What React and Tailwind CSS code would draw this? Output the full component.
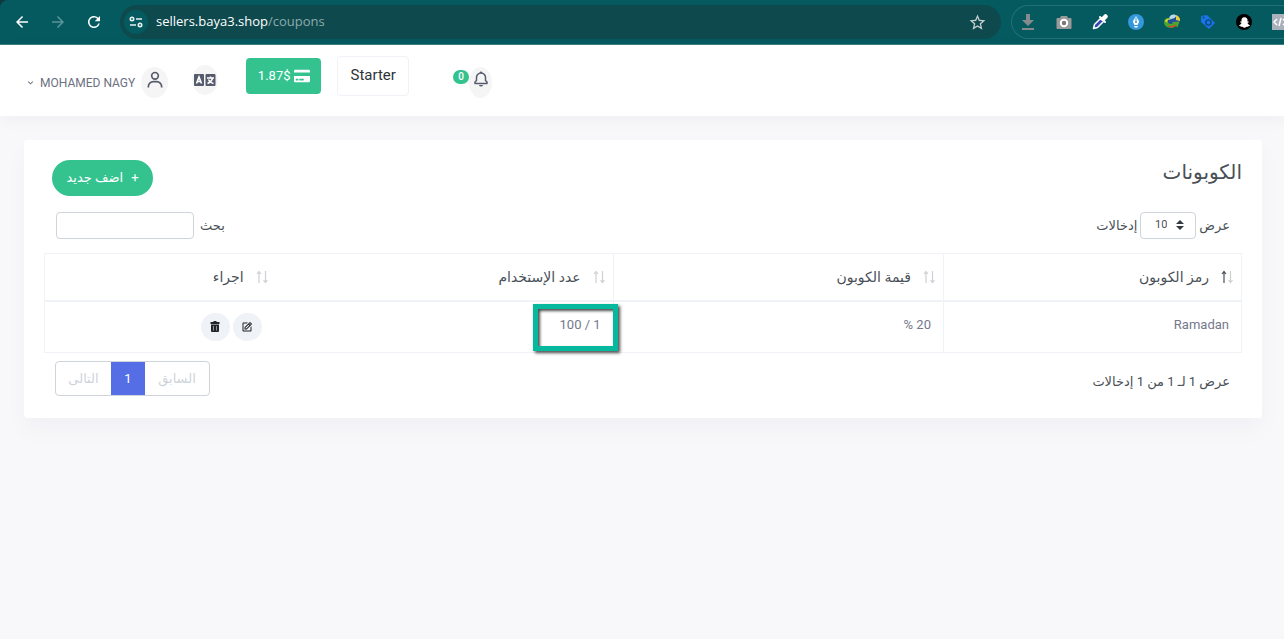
import { useState } from "react";
import { BiBell, BiChevronDown, BiEdit, BiUser } from "react-icons/bi";
import { FaCreditCard, FaSnapchatGhost } from "react-icons/fa";
import { MdArrowBack, MdArrowForward, MdRefresh, MdStarBorder } from "react-icons/md";

const columns = [
  { label: "رمز الكوبون", width: "w-[24.9%]", sorted: true },
  { label: "قيمة الكوبون", width: "w-[27.6%]" },
  { label: "عدد الإستخدام", width: "w-[28.2%]" },
  { label: "اجراء", width: "w-auto" },
];

const coupons = [{ code: "Ramadan", value: "20 %", usage: "1 / 100" }];

const SiteInfoIcon = () => (
  <svg viewBox="0 0 14 12" className="h-3 w-[14px]" fill="none" stroke="#e8f0f0" strokeWidth="1.6">
    <circle cx="3" cy="3" r="1.7" />
    <path d="M7 3h6M1 9h6" />
    <circle cx="11" cy="9" r="1.7" />
  </svg>
);

const DownloadIcon = () => (
  <svg viewBox="0 0 16 16" className="size-4" fill="#858b8c">
    <path d="M6 0h4v6h4l-6 6-6-6h4zM2 14h12v2H2z" />
  </svg>
);

const CameraIcon = () => (
  <svg viewBox="0 0 16 16" className="size-4">
    <path d="M5 2h6l1 2h2.500q1 0 1 1v9q0 1-1 1h-13q-1 0-1-1V5q0-1 1-1H4z" fill="#9a9a9a" />
    <circle cx="8" cy="9" r="3.200" fill="#777" stroke="#fff" strokeWidth="2" />
  </svg>
);

const DropperIcon = () => (
  <svg viewBox="0 0 16 16" className="size-4">
    <path d="M1.500 14.500l1-4 6.500-6.500 3 3-6.500 6.500z" fill="#3346b8" stroke="#fff" strokeWidth="1.500" strokeLinejoin="round" />
    <path d="M8 3l5 5" stroke="#fff" strokeWidth="2" strokeLinecap="round" />
    <path d="M11 5l2.500-2.500" stroke="#fff" strokeWidth="4.500" strokeLinecap="round" />
  </svg>
);

const PenNibIcon = () => (
  <svg viewBox="0 0 16 16" className="size-4">
    <circle cx="8" cy="8" r="8" fill="#3498db" />
    <path d="M8 2l3.200 5.500L9.600 11H6.400L4.800 7.500z" fill="#fff" />
    <path d="M6.400 12h3.200v1.500H6.400z" fill="#fff" />
    <path d="M8 3.500v4" stroke="#3498db" strokeWidth="1" />
    <circle cx="8" cy="8" r="1" fill="#3498db" />
  </svg>
);

const GlobeIcon = () => (
  <svg viewBox="0 0 16 16" className="size-4">
    <circle cx="10" cy="6.500" r="6" fill="#234d9d" />
    <path d="M5.500 3c2-3 5-3 7-1l-2 2-3 1-3 1z" fill="#b4dbe8" />
    <path d="M12 1c3 1 4.500 4 4 6l-4-1z" fill="#e7ce38" />
    <path d="M0 8c0-4 4-5 7-3-3 0-4 2-3 3.500s3 2 5 .5L8 8l7.500-.5-2 6-1.500-1.500C8 15.500 0 14 0 8z" fill="#4da52e" />
    <path d="M1 7c1-2 4-3 5.500-2-2 0-4 2-3 4z" fill="#e6d62f" />
    <path d="M4 11.500c3 1 5 .5 7-1l1 1.200c-2 2-5 2.300-8 .8z" fill="#d34a2b" />
  </svg>
);

const TagIcon = () => (
  <svg viewBox="0 0 16 16" className="size-4">
    <path d="M1 2l6-1 8 8-6 6-8-7z" fill="#1a73e8" />
    <circle cx="3.500" cy="3.500" r="1" fill="#055a60" />
    <circle cx="8.500" cy="8.500" r="2.600" fill="none" stroke="#0b4b78" strokeWidth="1.400" />
  </svg>
);

const CodeIcon = () => (
  <svg viewBox="0 0 16 16" className="size-4">
    <path d="M0 0h16v16H0z" fill="#a9b1ba" />
    <path d="M5 5L2 8l3 3M9 4l-2 8M11 5l3 3-3 3" fill="none" stroke="#fff" strokeWidth="1.500" />
  </svg>
);

const LanguageIcon = () => (
  <svg viewBox="0 0 22 12" className="h-3 w-[22px]" fill="none">
    <rect width="10" height="12" rx="1" fill="#555b6d" />
    <rect x="11.500" width="10" height="12" rx="1" fill="#555b6d" />
    <path d="M2.500 9.500L5 3l2.500 6.500M3.500 7.500h3" stroke="#fff" strokeWidth="1.600" />
    <path d="M13 4h7M16.500 2.500V4M18.500 4c-.5 2.500-2.500 4.500-5 5.500M14.500 5.500c1 2 2.500 3.500 5 4" stroke="#fff" strokeWidth="1.500" />
  </svg>
);

const TrashIcon = () => (
  <svg viewBox="0 0 10 11" className="h-[11px] w-[10px]" fill="#212529">
    <path d="M3.500 0h3v1H9.500v2H.5V1h3z" />
    <path d="M1 3.500h8V10q0 1-1 1H2q-1 0-1-1z" />
    <path d="M3.500 5v4.500M6.500 5v4.500" stroke="#9aa3b0" strokeWidth="0.900" />
  </svg>
);

const SortIcon = ({ sorted }) => (
  <svg viewBox="0 0 12 14" className="h-[14px] w-3" fill="none" strokeWidth="1.200">
    <path d="M3 13V1.500M1 4l2-2.500L5 4" stroke={sorted ? "#495057" : "#ced0d4"} />
    <path d="M9.500 1v11.500M7.500 10l2 2.500 2-2.500" stroke="#ced0d4" />
  </svg>
);

const BrowserBar = () => (
  <header className="bg-[#10383c]">
    <div className="flex h-[45px] items-center overflow-hidden rounded-tl-lg border-b border-[#3c8085] bg-[#055a60] pl-[13px]">
      <div className="flex shrink-0 items-center gap-[18px] text-white">
        <button aria-label="Back"><MdArrowBack size={18} /></button>
        <button aria-label="Forward" className="text-[#5c9599]"><MdArrowForward size={18} /></button>
        <button aria-label="Reload"><MdRefresh size={18} /></button>
      </div>
      <div className="ml-[17px] flex h-[34px] flex-1 items-center rounded-full bg-[#0e494e] pr-[14px] pl-1">
        <button aria-label="Site information" className="flex size-6 items-center justify-center rounded-full bg-[#055a60]">
          <SiteInfoIcon />
        </button>
        <p className="ml-2 flex-1 font-['Open_Sans',sans-serif] text-[13px] text-white">
          sellers.baya3.shop<span className="text-[#8fabad]">/coupons</span>
        </p>
        <button aria-label="Bookmark" className="text-[#c7d0d1]"><MdStarBorder size={19} /></button>
      </div>
      <div className="ml-[10px] flex h-[34px] w-[273px] shrink-0 items-center gap-5 overflow-hidden rounded-l-full border border-r-0 border-[#236f74] pl-2 *:shrink-0">
        <DownloadIcon />
        <CameraIcon />
        <DropperIcon />
        <PenNibIcon />
        <GlobeIcon />
        <TagIcon />
        <span className="flex size-4 items-center justify-center rounded-full bg-black text-white">
          <FaSnapchatGhost size={11} />
        </span>
        <CodeIcon />
      </div>
    </div>
  </header>
);

const TopNav = () => (
  <nav className="flex h-[71px] items-center bg-white pl-[25px] text-[#555b6d] shadow-[0_4px_16px_rgba(18,38,63,0.04)]">
    <button className="mt-1 flex items-center text-[#6c7180]">
      <BiChevronDown size={11} />
      <span className="ml-1 text-xs">MOHAMED NAGY</span>
      <span className="ml-[6px] flex h-[31px] w-[27px] items-center justify-center rounded-[50%] bg-[#f5f5f5] pb-[6px] text-[#555b6d]">
        <BiUser size={20} className="shrink-0" />
      </span>
    </button>
    <button aria-label="Language" className="mb-[2px] ml-6 flex h-[30px] w-[26px] items-center justify-center rounded-[50%] bg-[#f5f5f5]">
      <span className="shrink-0"><LanguageIcon /></span>
    </button>
    <button className="mb-[10px] ml-7 flex h-9 w-[75px] items-center justify-center gap-[3px] rounded bg-[#34c38f] text-[13px] text-white">
      1.87$ <FaCreditCard size={16} />
    </button>
    <a href="#plan" className="mb-[10px] ml-4 flex h-10 w-[72px] items-center justify-center rounded border border-[#eff2f7] text-[15px] text-[#2f3338]">
      Starter
    </a>
    <button aria-label="Notifications" className="mt-1 ml-11 flex items-center">
      <span className="mb-3 flex h-[14px] w-4 items-center justify-center rounded-full bg-[#34c38f] text-[10px] font-medium text-white">0</span>
      <span className="flex h-[31px] w-[23px] items-center justify-center rounded-[50%] bg-[#f5f5f5] pb-2">
        <BiBell size={18} className="shrink-0" />
      </span>
    </button>
  </nav>
);

const CouponTable = () => (
  <table className="w-full table-fixed border-collapse border border-[#eff2f7]">
    <thead>
      <tr className="h-[47px] border-b-2 border-[#eff2f7]">
        {columns.map((col, i) => (
          <th key={col.label} className={`${col.width} ${i < 2 ? "border-l border-[#eff2f7]" : ""} pr-2 text-right text-sm font-normal text-[#495057]`}>
            <button className="flex items-center gap-3">
              <SortIcon sorted={col.sorted} />
              {col.label}
            </button>
          </th>
        ))}
      </tr>
    </thead>
    <tbody>
      {coupons.map((coupon) => (
        <tr key={coupon.code} className="h-[52px] text-[13px] text-[#74788d]">
          <td className="border-l border-[#eff2f7] px-3 pb-1">{coupon.code}</td>
          <td className="border-l border-[#eff2f7] px-3 pb-1">{coupon.value}</td>
          <td className="relative px-3 pb-1">
            {coupon.usage}
            <span className="absolute top-[2px] -right-[5px] h-[47px] w-[85px] border-[5px] border-[#06b89d] shadow-[2px_2px_3px_rgba(0,0,0,0.7),inset_2px_2px_3px_rgba(0,0,0,0.7)]" />
          </td>
          <td className="px-[14px]">
            <div className="flex gap-[3px] text-[#212529]">
              <button aria-label="تعديل" className="flex h-7 w-[29px] items-center justify-center rounded-full bg-[#eff2f7]"><BiEdit size={12} /></button>
              <button aria-label="حذف" className="flex h-7 w-[29px] items-center justify-center rounded-full bg-[#eff2f7]"><TrashIcon /></button>
            </div>
          </td>
        </tr>
      ))}
    </tbody>
  </table>
);

const CouponsCard = () => {
  const [search, setSearch] = useState("");

  return (
    <section dir="rtl" className="mt-6 mr-[22px] ml-6 rounded bg-white px-5 pt-5 pb-[22px] text-[#495057] shadow-[0_12px_24px_rgba(18,38,63,0.03)]">
      <div className="flex items-start justify-between pl-2">
        <h1 className="text-xl leading-6">الكوبونات</h1>
        <button className="flex h-9 w-[101px] items-center justify-center gap-2 rounded-full bg-[#34c38f] text-[13px] text-white">
          <span>+</span>اضف جديد
        </button>
      </div>
      <div className="mt-4 flex h-[27px] items-center justify-between pr-3 pl-3 text-[13px]">
        <label className="flex items-center gap-[3px]">
          عرض
          <span className="relative">
            <select className="h-[27px] w-14 appearance-none rounded border border-[#ced4da] bg-white pr-7 text-[11px] text-[#495057]">
              <option>10</option>
              <option>25</option>
            </select>
            <svg viewBox="0 0 8 10" className="pointer-events-none absolute top-2 right-3 h-[10px] w-2" fill="#343a40">
              <path d="M4 0l4 4H0zM4 10l4-4H0z" />
            </svg>
          </span>
          إدخالات
        </label>
        <label className="flex items-center gap-[6px]">
          بحث
          <input
            type="search"
            value={search}
            onChange={(e) => setSearch(e.target.value)}
            className="h-[27px] w-[138px] rounded border border-[#ced4da] px-2"
          />
        </label>
      </div>
      <div className="mt-[14px]">
        <CouponTable />
      </div>
      <div className="mt-2 flex items-start justify-between pr-3 pl-[11px]">
        <p className="mt-[11px] text-[13px] leading-5">عرض 1 لـ 1 من 1 إدخالات</p>
        <div className="flex h-[35px] overflow-hidden rounded border border-[#ced4da] text-[13px] text-[#ced4da]">
          <button className="w-16">السابق</button>
          <button className="-my-px w-[34px] bg-[#556ee6] text-white">1</button>
          <button className="w-[55px]">التالى</button>
        </div>
      </div>
    </section>
  );
};

const App = () => (
  <div className="min-h-screen bg-[#f8f8fb] font-[Roboto,'DejaVu_Sans',sans-serif]">
    <BrowserBar />
    <TopNav />
    <CouponsCard />
  </div>
);

export default App;
